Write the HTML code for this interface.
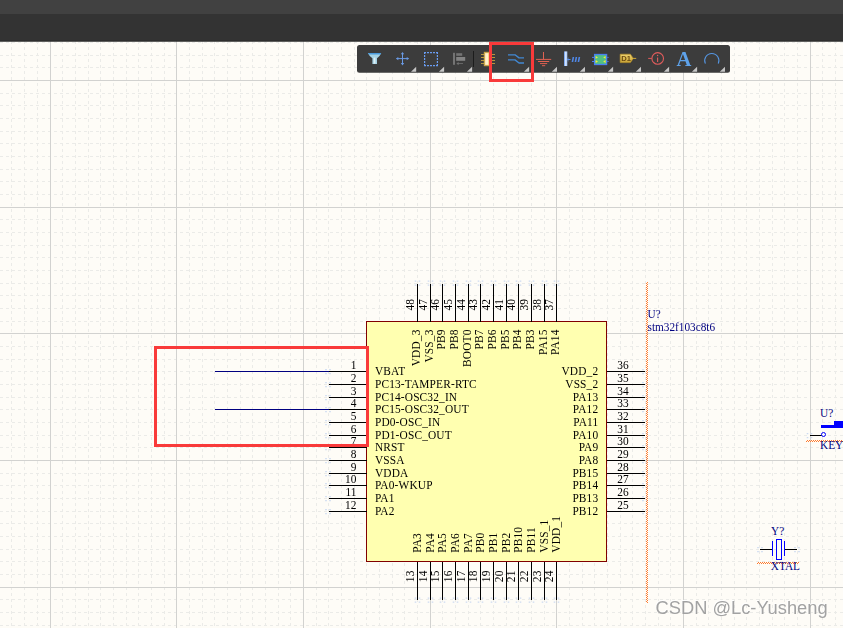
<!DOCTYPE html>
<html><head><meta charset="utf-8"><title>schematic</title>
<style>
html,body{margin:0;padding:0;background:#fefcf7;}
body{width:843px;height:628px;overflow:hidden;position:relative;font-family:"Liberation Sans",sans-serif;}
svg{position:absolute;left:0;top:0;display:block;}
.pn{font-family:"Liberation Serif",serif;font-size:12px;fill:#000;letter-spacing:0.16px;}
.bl{font-family:"Liberation Serif",serif;font-size:12px;fill:#000080;}
.wm{font-family:"Liberation Sans",sans-serif;font-size:18.3px;}
</style></head><body>
<svg width="843" height="628" viewBox="0 0 843 628">
<rect x="0" y="0" width="843" height="628" fill="#fefcf7"/>
<g shape-rendering="crispEdges" fill="none">
<path d="M11.5 41V628M24.5 41V628M37.5 41V628M62.5 41V628M75.5 41V628M88.5 41V628M100.5 41V628M113.5 41V628M126.5 41V628M138.5 41V628M151.5 41V628M164.5 41V628M189.5 41V628M202.5 41V628M214.5 41V628M227.5 41V628M240.5 41V628M252.5 41V628M265.5 41V628M278.5 41V628M290.5 41V628M316.5 41V628M328.5 41V628M341.5 41V628M354.5 41V628M366.5 41V628M379.5 41V628M392.5 41V628M404.5 41V628M417.5 41V628M442.5 41V628M455.5 41V628M468.5 41V628M480.5 41V628M493.5 41V628M506.5 41V628M518.5 41V628M531.5 41V628M544.5 41V628M569.5 41V628M582.5 41V628M594.5 41V628M607.5 41V628M620.5 41V628M632.5 41V628M645.5 41V628M658.5 41V628M670.5 41V628M696.5 41V628M708.5 41V628M721.5 41V628M734.5 41V628M746.5 41V628M759.5 41V628M772.5 41V628M784.5 41V628M797.5 41V628M822.5 41V628M835.5 41V628" stroke="#ebebe8" stroke-width="1" stroke-dasharray="3 3" stroke-dashoffset="0"/>
<path d="M0 42.5H843M0 55.5H843M0 67.5H843M0 93.5H843M0 105.5H843M0 118.5H843M0 131.5H843M0 143.5H843M0 156.5H843M0 169.5H843M0 181.5H843M0 194.5H843M0 219.5H843M0 232.5H843M0 245.5H843M0 257.5H843M0 270.5H843M0 283.5H843M0 295.5H843M0 308.5H843M0 321.5H843M0 346.5H843M0 359.5H843M0 371.5H843M0 384.5H843M0 397.5H843M0 409.5H843M0 422.5H843M0 435.5H843M0 447.5H843M0 473.5H843M0 485.5H843M0 498.5H843M0 511.5H843M0 523.5H843M0 536.5H843M0 549.5H843M0 561.5H843M0 574.5H843M0 599.5H843M0 612.5H843M0 625.5H843" stroke="#ebebe8" stroke-width="1" stroke-dasharray="3 3" stroke-dashoffset="0"/>
<path d="M50.5 41V628M176.5 41V628M303.5 41V628M430.5 41V628M556.5 41V628M683.5 41V628M810.5 41V628M0 80.5H843M0 207.5H843M0 333.5H843M0 460.5H843M0 587.5H843" stroke="#d2d2d0" stroke-width="1"/>
</g>
<rect x="366.5" y="321.5" width="240.0" height="240.0" fill="#ffffb0" stroke="#800000" stroke-width="1" shape-rendering="crispEdges"/>
<path d="M325.2 368.9h1.6v1.3h-1.6zM325.2 372.9h1.6v1.3h-1.6zM329.2 368.9h1.6v1.3h-1.6zM329.2 372.9h1.6v1.3h-1.6zM642.2 368.9h1.6v1.3h-1.6zM642.2 372.9h1.6v1.3h-1.6zM646.2 368.9h1.6v1.3h-1.6zM646.2 372.9h1.6v1.3h-1.6zM414.7 280.4h1.6v1.3h-1.6zM414.7 284.4h1.6v1.3h-1.6zM418.7 280.4h1.6v1.3h-1.6zM418.7 284.4h1.6v1.3h-1.6zM414.7 597.4h1.6v1.3h-1.6zM414.7 601.4h1.6v1.3h-1.6zM418.7 597.4h1.6v1.3h-1.6zM418.7 601.4h1.6v1.3h-1.6zM325.2 381.9h1.6v1.3h-1.6zM325.2 385.9h1.6v1.3h-1.6zM329.2 381.9h1.6v1.3h-1.6zM329.2 385.9h1.6v1.3h-1.6zM642.2 381.9h1.6v1.3h-1.6zM642.2 385.9h1.6v1.3h-1.6zM646.2 381.9h1.6v1.3h-1.6zM646.2 385.9h1.6v1.3h-1.6zM427.7 280.4h1.6v1.3h-1.6zM427.7 284.4h1.6v1.3h-1.6zM431.7 280.4h1.6v1.3h-1.6zM431.7 284.4h1.6v1.3h-1.6zM427.7 597.4h1.6v1.3h-1.6zM427.7 601.4h1.6v1.3h-1.6zM431.7 597.4h1.6v1.3h-1.6zM431.7 601.4h1.6v1.3h-1.6zM325.2 394.9h1.6v1.3h-1.6zM325.2 398.9h1.6v1.3h-1.6zM329.2 394.9h1.6v1.3h-1.6zM329.2 398.9h1.6v1.3h-1.6zM642.2 394.9h1.6v1.3h-1.6zM642.2 398.9h1.6v1.3h-1.6zM646.2 394.9h1.6v1.3h-1.6zM646.2 398.9h1.6v1.3h-1.6zM439.7 280.4h1.6v1.3h-1.6zM439.7 284.4h1.6v1.3h-1.6zM443.7 280.4h1.6v1.3h-1.6zM443.7 284.4h1.6v1.3h-1.6zM439.7 597.4h1.6v1.3h-1.6zM439.7 601.4h1.6v1.3h-1.6zM443.7 597.4h1.6v1.3h-1.6zM443.7 601.4h1.6v1.3h-1.6zM325.2 406.9h1.6v1.3h-1.6zM325.2 410.9h1.6v1.3h-1.6zM329.2 406.9h1.6v1.3h-1.6zM329.2 410.9h1.6v1.3h-1.6zM642.2 406.9h1.6v1.3h-1.6zM642.2 410.9h1.6v1.3h-1.6zM646.2 406.9h1.6v1.3h-1.6zM646.2 410.9h1.6v1.3h-1.6zM452.7 280.4h1.6v1.3h-1.6zM452.7 284.4h1.6v1.3h-1.6zM456.7 280.4h1.6v1.3h-1.6zM456.7 284.4h1.6v1.3h-1.6zM452.7 597.4h1.6v1.3h-1.6zM452.7 601.4h1.6v1.3h-1.6zM456.7 597.4h1.6v1.3h-1.6zM456.7 601.4h1.6v1.3h-1.6zM325.2 419.9h1.6v1.3h-1.6zM325.2 423.9h1.6v1.3h-1.6zM329.2 419.9h1.6v1.3h-1.6zM329.2 423.9h1.6v1.3h-1.6zM642.2 419.9h1.6v1.3h-1.6zM642.2 423.9h1.6v1.3h-1.6zM646.2 419.9h1.6v1.3h-1.6zM646.2 423.9h1.6v1.3h-1.6zM465.7 280.4h1.6v1.3h-1.6zM465.7 284.4h1.6v1.3h-1.6zM469.7 280.4h1.6v1.3h-1.6zM469.7 284.4h1.6v1.3h-1.6zM465.7 597.4h1.6v1.3h-1.6zM465.7 601.4h1.6v1.3h-1.6zM469.7 597.4h1.6v1.3h-1.6zM469.7 601.4h1.6v1.3h-1.6zM325.2 432.9h1.6v1.3h-1.6zM325.2 436.9h1.6v1.3h-1.6zM329.2 432.9h1.6v1.3h-1.6zM329.2 436.9h1.6v1.3h-1.6zM642.2 432.9h1.6v1.3h-1.6zM642.2 436.9h1.6v1.3h-1.6zM646.2 432.9h1.6v1.3h-1.6zM646.2 436.9h1.6v1.3h-1.6zM477.7 280.4h1.6v1.3h-1.6zM477.7 284.4h1.6v1.3h-1.6zM481.7 280.4h1.6v1.3h-1.6zM481.7 284.4h1.6v1.3h-1.6zM477.7 597.4h1.6v1.3h-1.6zM477.7 601.4h1.6v1.3h-1.6zM481.7 597.4h1.6v1.3h-1.6zM481.7 601.4h1.6v1.3h-1.6zM325.2 444.9h1.6v1.3h-1.6zM325.2 448.9h1.6v1.3h-1.6zM329.2 444.9h1.6v1.3h-1.6zM329.2 448.9h1.6v1.3h-1.6zM642.2 444.9h1.6v1.3h-1.6zM642.2 448.9h1.6v1.3h-1.6zM646.2 444.9h1.6v1.3h-1.6zM646.2 448.9h1.6v1.3h-1.6zM490.7 280.4h1.6v1.3h-1.6zM490.7 284.4h1.6v1.3h-1.6zM494.7 280.4h1.6v1.3h-1.6zM494.7 284.4h1.6v1.3h-1.6zM490.7 597.4h1.6v1.3h-1.6zM490.7 601.4h1.6v1.3h-1.6zM494.7 597.4h1.6v1.3h-1.6zM494.7 601.4h1.6v1.3h-1.6zM325.2 457.9h1.6v1.3h-1.6zM325.2 461.9h1.6v1.3h-1.6zM329.2 457.9h1.6v1.3h-1.6zM329.2 461.9h1.6v1.3h-1.6zM642.2 457.9h1.6v1.3h-1.6zM642.2 461.9h1.6v1.3h-1.6zM646.2 457.9h1.6v1.3h-1.6zM646.2 461.9h1.6v1.3h-1.6zM503.7 280.4h1.6v1.3h-1.6zM503.7 284.4h1.6v1.3h-1.6zM507.7 280.4h1.6v1.3h-1.6zM507.7 284.4h1.6v1.3h-1.6zM503.7 597.4h1.6v1.3h-1.6zM503.7 601.4h1.6v1.3h-1.6zM507.7 597.4h1.6v1.3h-1.6zM507.7 601.4h1.6v1.3h-1.6zM325.2 470.9h1.6v1.3h-1.6zM325.2 474.9h1.6v1.3h-1.6zM329.2 470.9h1.6v1.3h-1.6zM329.2 474.9h1.6v1.3h-1.6zM642.2 470.9h1.6v1.3h-1.6zM642.2 474.9h1.6v1.3h-1.6zM646.2 470.9h1.6v1.3h-1.6zM646.2 474.9h1.6v1.3h-1.6zM515.7 280.4h1.6v1.3h-1.6zM515.7 284.4h1.6v1.3h-1.6zM519.7 280.4h1.6v1.3h-1.6zM519.7 284.4h1.6v1.3h-1.6zM515.7 597.4h1.6v1.3h-1.6zM515.7 601.4h1.6v1.3h-1.6zM519.7 597.4h1.6v1.3h-1.6zM519.7 601.4h1.6v1.3h-1.6zM325.2 482.9h1.6v1.3h-1.6zM325.2 486.9h1.6v1.3h-1.6zM329.2 482.9h1.6v1.3h-1.6zM329.2 486.9h1.6v1.3h-1.6zM642.2 482.9h1.6v1.3h-1.6zM642.2 486.9h1.6v1.3h-1.6zM646.2 482.9h1.6v1.3h-1.6zM646.2 486.9h1.6v1.3h-1.6zM528.7 280.4h1.6v1.3h-1.6zM528.7 284.4h1.6v1.3h-1.6zM532.7 280.4h1.6v1.3h-1.6zM532.7 284.4h1.6v1.3h-1.6zM528.7 597.4h1.6v1.3h-1.6zM528.7 601.4h1.6v1.3h-1.6zM532.7 597.4h1.6v1.3h-1.6zM532.7 601.4h1.6v1.3h-1.6zM325.2 495.9h1.6v1.3h-1.6zM325.2 499.9h1.6v1.3h-1.6zM329.2 495.9h1.6v1.3h-1.6zM329.2 499.9h1.6v1.3h-1.6zM642.2 495.9h1.6v1.3h-1.6zM642.2 499.9h1.6v1.3h-1.6zM646.2 495.9h1.6v1.3h-1.6zM646.2 499.9h1.6v1.3h-1.6zM541.7 280.4h1.6v1.3h-1.6zM541.7 284.4h1.6v1.3h-1.6zM545.7 280.4h1.6v1.3h-1.6zM545.7 284.4h1.6v1.3h-1.6zM541.7 597.4h1.6v1.3h-1.6zM541.7 601.4h1.6v1.3h-1.6zM545.7 597.4h1.6v1.3h-1.6zM545.7 601.4h1.6v1.3h-1.6zM325.2 508.9h1.6v1.3h-1.6zM325.2 512.9h1.6v1.3h-1.6zM329.2 508.9h1.6v1.3h-1.6zM329.2 512.9h1.6v1.3h-1.6zM642.2 508.9h1.6v1.3h-1.6zM642.2 512.9h1.6v1.3h-1.6zM646.2 508.9h1.6v1.3h-1.6zM646.2 512.9h1.6v1.3h-1.6zM553.7 280.4h1.6v1.3h-1.6zM553.7 284.4h1.6v1.3h-1.6zM557.7 280.4h1.6v1.3h-1.6zM557.7 284.4h1.6v1.3h-1.6zM553.7 597.4h1.6v1.3h-1.6zM553.7 601.4h1.6v1.3h-1.6zM557.7 597.4h1.6v1.3h-1.6zM557.7 601.4h1.6v1.3h-1.6zM757.2 546.9h1.6v1.3h-1.6zM757.2 550.9h1.6v1.3h-1.6zM761.2 546.9h1.6v1.3h-1.6zM761.2 550.9h1.6v1.3h-1.6zM794.2 546.9h1.6v1.3h-1.6zM794.2 550.9h1.6v1.3h-1.6zM798.2 546.9h1.6v1.3h-1.6zM798.2 550.9h1.6v1.3h-1.6zM806.7 432.9h1.6v1.3h-1.6zM806.7 436.9h1.6v1.3h-1.6zM810.7 432.9h1.6v1.3h-1.6zM810.7 436.9h1.6v1.3h-1.6z" fill="#cddaf1"/>
<path d="M329.0 371.5H366.5M606.5 371.5H645.0M417.5 284.0V321.5M417.5 561.5V600.0M329.0 384.5H366.5M606.5 384.5H645.0M430.5 284.0V321.5M430.5 561.5V600.0M329.0 397.5H366.5M606.5 397.5H645.0M442.5 284.0V321.5M442.5 561.5V600.0M329.0 409.5H366.5M606.5 409.5H645.0M455.5 284.0V321.5M455.5 561.5V600.0M329.0 422.5H366.5M606.5 422.5H645.0M468.5 284.0V321.5M468.5 561.5V600.0M329.0 435.5H366.5M606.5 435.5H645.0M480.5 284.0V321.5M480.5 561.5V600.0M329.0 447.5H366.5M606.5 447.5H645.0M493.5 284.0V321.5M493.5 561.5V600.0M329.0 460.5H366.5M606.5 460.5H645.0M506.5 284.0V321.5M506.5 561.5V600.0M329.0 473.5H366.5M606.5 473.5H645.0M518.5 284.0V321.5M518.5 561.5V600.0M329.0 485.5H366.5M606.5 485.5H645.0M531.5 284.0V321.5M531.5 561.5V600.0M329.0 498.5H366.5M606.5 498.5H645.0M544.5 284.0V321.5M544.5 561.5V600.0M329.0 511.5H366.5M606.5 511.5H645.0M556.5 284.0V321.5M556.5 561.5V600.0" stroke="#000" stroke-width="1" fill="none" shape-rendering="crispEdges"/>
<g opacity="0.999"><text class="pn" transform="translate(356.7 368.7) scale(0.950 1)" text-anchor="end">1</text>
<text class="pn" transform="translate(374.9 374.8) scale(0.950 1)">VBAT</text>
<text class="pn" transform="translate(617.2 368.5) scale(0.950 1)">36</text>
<text class="pn" transform="translate(598.3 374.7) scale(0.950 1)" text-anchor="end">VDD_2</text>
<text class="pn" transform="translate(414.2 310.5) rotate(-90) scale(0.950 1)">48</text>
<text class="pn" transform="translate(419.7 329.5) rotate(-90) scale(0.950 1)" text-anchor="end">VDD_3</text>
<text class="pn" transform="translate(414.2 570.5) rotate(-90) scale(0.950 1)" text-anchor="end">13</text>
<text class="pn" transform="translate(420.5 552.7) rotate(-90) scale(0.950 1)">PA3</text>
<text class="pn" transform="translate(356.7 381.7) scale(0.950 1)" text-anchor="end">2</text>
<text class="pn" transform="translate(374.9 387.8) scale(0.950 1)">PC13-TAMPER-RTC</text>
<text class="pn" transform="translate(617.2 381.5) scale(0.950 1)">35</text>
<text class="pn" transform="translate(598.3 387.7) scale(0.950 1)" text-anchor="end">VSS_2</text>
<text class="pn" transform="translate(427.2 310.5) rotate(-90) scale(0.950 1)">47</text>
<text class="pn" transform="translate(432.7 329.5) rotate(-90) scale(0.950 1)" text-anchor="end">VSS_3</text>
<text class="pn" transform="translate(427.2 570.5) rotate(-90) scale(0.950 1)" text-anchor="end">14</text>
<text class="pn" transform="translate(433.5 552.7) rotate(-90) scale(0.950 1)">PA4</text>
<text class="pn" transform="translate(356.7 394.7) scale(0.950 1)" text-anchor="end">3</text>
<text class="pn" transform="translate(374.9 400.8) scale(0.950 1)">PC14-OSC32_IN</text>
<text class="pn" transform="translate(617.2 394.5) scale(0.950 1)">34</text>
<text class="pn" transform="translate(598.3 400.7) scale(0.950 1)" text-anchor="end">PA13</text>
<text class="pn" transform="translate(439.2 310.5) rotate(-90) scale(0.950 1)">46</text>
<text class="pn" transform="translate(444.7 329.5) rotate(-90) scale(0.950 1)" text-anchor="end">PB9</text>
<text class="pn" transform="translate(439.2 570.5) rotate(-90) scale(0.950 1)" text-anchor="end">15</text>
<text class="pn" transform="translate(445.5 552.7) rotate(-90) scale(0.950 1)">PA5</text>
<text class="pn" transform="translate(356.7 406.7) scale(0.950 1)" text-anchor="end">4</text>
<text class="pn" transform="translate(374.9 412.8) scale(0.950 1)">PC15-OSC32_OUT</text>
<text class="pn" transform="translate(617.2 406.5) scale(0.950 1)">33</text>
<text class="pn" transform="translate(598.3 412.7) scale(0.950 1)" text-anchor="end">PA12</text>
<text class="pn" transform="translate(452.2 310.5) rotate(-90) scale(0.950 1)">45</text>
<text class="pn" transform="translate(457.7 329.5) rotate(-90) scale(0.950 1)" text-anchor="end">PB8</text>
<text class="pn" transform="translate(452.2 570.5) rotate(-90) scale(0.950 1)" text-anchor="end">16</text>
<text class="pn" transform="translate(458.5 552.7) rotate(-90) scale(0.950 1)">PA6</text>
<text class="pn" transform="translate(356.7 419.7) scale(0.950 1)" text-anchor="end">5</text>
<text class="pn" transform="translate(374.9 425.8) scale(0.950 1)">PD0-OSC_IN</text>
<text class="pn" transform="translate(617.2 419.5) scale(0.950 1)">32</text>
<text class="pn" transform="translate(598.3 425.7) scale(0.950 1)" text-anchor="end">PA11</text>
<text class="pn" transform="translate(465.2 310.5) rotate(-90) scale(0.950 1)">44</text>
<text class="pn" transform="translate(470.7 329.5) rotate(-90) scale(0.950 1)" text-anchor="end">BOOT0</text>
<text class="pn" transform="translate(465.2 570.5) rotate(-90) scale(0.950 1)" text-anchor="end">17</text>
<text class="pn" transform="translate(471.5 552.7) rotate(-90) scale(0.950 1)">PA7</text>
<text class="pn" transform="translate(356.7 432.7) scale(0.950 1)" text-anchor="end">6</text>
<text class="pn" transform="translate(374.9 438.8) scale(0.950 1)">PD1-OSC_OUT</text>
<text class="pn" transform="translate(617.2 432.5) scale(0.950 1)">31</text>
<text class="pn" transform="translate(598.3 438.7) scale(0.950 1)" text-anchor="end">PA10</text>
<text class="pn" transform="translate(477.2 310.5) rotate(-90) scale(0.950 1)">43</text>
<text class="pn" transform="translate(482.7 329.5) rotate(-90) scale(0.950 1)" text-anchor="end">PB7</text>
<text class="pn" transform="translate(477.2 570.5) rotate(-90) scale(0.950 1)" text-anchor="end">18</text>
<text class="pn" transform="translate(483.5 552.7) rotate(-90) scale(0.950 1)">PB0</text>
<text class="pn" transform="translate(356.7 444.7) scale(0.950 1)" text-anchor="end">7</text>
<text class="pn" transform="translate(374.9 450.8) scale(0.950 1)">NRST</text>
<text class="pn" transform="translate(617.2 444.5) scale(0.950 1)">30</text>
<text class="pn" transform="translate(598.3 450.7) scale(0.950 1)" text-anchor="end">PA9</text>
<text class="pn" transform="translate(490.2 310.5) rotate(-90) scale(0.950 1)">42</text>
<text class="pn" transform="translate(495.7 329.5) rotate(-90) scale(0.950 1)" text-anchor="end">PB6</text>
<text class="pn" transform="translate(490.2 570.5) rotate(-90) scale(0.950 1)" text-anchor="end">19</text>
<text class="pn" transform="translate(496.5 552.7) rotate(-90) scale(0.950 1)">PB1</text>
<text class="pn" transform="translate(356.7 457.7) scale(0.950 1)" text-anchor="end">8</text>
<text class="pn" transform="translate(374.9 463.8) scale(0.950 1)">VSSA</text>
<text class="pn" transform="translate(617.2 457.5) scale(0.950 1)">29</text>
<text class="pn" transform="translate(598.3 463.7) scale(0.950 1)" text-anchor="end">PA8</text>
<text class="pn" transform="translate(503.2 310.5) rotate(-90) scale(0.950 1)">41</text>
<text class="pn" transform="translate(508.7 329.5) rotate(-90) scale(0.950 1)" text-anchor="end">PB5</text>
<text class="pn" transform="translate(503.2 570.5) rotate(-90) scale(0.950 1)" text-anchor="end">20</text>
<text class="pn" transform="translate(509.5 552.7) rotate(-90) scale(0.950 1)">PB2</text>
<text class="pn" transform="translate(356.7 470.7) scale(0.950 1)" text-anchor="end">9</text>
<text class="pn" transform="translate(374.9 476.8) scale(0.950 1)">VDDA</text>
<text class="pn" transform="translate(617.2 470.5) scale(0.950 1)">28</text>
<text class="pn" transform="translate(598.3 476.7) scale(0.950 1)" text-anchor="end">PB15</text>
<text class="pn" transform="translate(515.2 310.5) rotate(-90) scale(0.950 1)">40</text>
<text class="pn" transform="translate(520.7 329.5) rotate(-90) scale(0.950 1)" text-anchor="end">PB4</text>
<text class="pn" transform="translate(515.2 570.5) rotate(-90) scale(0.950 1)" text-anchor="end">21</text>
<text class="pn" transform="translate(521.5 552.7) rotate(-90) scale(0.950 1)">PB10</text>
<text class="pn" transform="translate(356.7 482.7) scale(0.950 1)" text-anchor="end">10</text>
<text class="pn" transform="translate(374.9 488.8) scale(0.950 1)">PA0-WKUP</text>
<text class="pn" transform="translate(617.2 482.5) scale(0.950 1)">27</text>
<text class="pn" transform="translate(598.3 488.7) scale(0.950 1)" text-anchor="end">PB14</text>
<text class="pn" transform="translate(528.2 310.5) rotate(-90) scale(0.950 1)">39</text>
<text class="pn" transform="translate(533.7 329.5) rotate(-90) scale(0.950 1)" text-anchor="end">PB3</text>
<text class="pn" transform="translate(528.2 570.5) rotate(-90) scale(0.950 1)" text-anchor="end">22</text>
<text class="pn" transform="translate(534.5 552.7) rotate(-90) scale(0.950 1)">PB11</text>
<text class="pn" transform="translate(356.7 495.7) scale(0.950 1)" text-anchor="end">11</text>
<text class="pn" transform="translate(374.9 501.8) scale(0.950 1)">PA1</text>
<text class="pn" transform="translate(617.2 495.5) scale(0.950 1)">26</text>
<text class="pn" transform="translate(598.3 501.7) scale(0.950 1)" text-anchor="end">PB13</text>
<text class="pn" transform="translate(541.2 310.5) rotate(-90) scale(0.950 1)">38</text>
<text class="pn" transform="translate(546.7 329.5) rotate(-90) scale(0.950 1)" text-anchor="end">PA15</text>
<text class="pn" transform="translate(541.2 570.5) rotate(-90) scale(0.950 1)" text-anchor="end">23</text>
<text class="pn" transform="translate(547.5 552.7) rotate(-90) scale(0.950 1)">VSS_1</text>
<text class="pn" transform="translate(356.7 508.7) scale(0.950 1)" text-anchor="end">12</text>
<text class="pn" transform="translate(374.9 514.8) scale(0.950 1)">PA2</text>
<text class="pn" transform="translate(617.2 508.5) scale(0.950 1)">25</text>
<text class="pn" transform="translate(598.3 514.7) scale(0.950 1)" text-anchor="end">PB12</text>
<text class="pn" transform="translate(553.2 310.5) rotate(-90) scale(0.950 1)">37</text>
<text class="pn" transform="translate(558.7 329.5) rotate(-90) scale(0.950 1)" text-anchor="end">PA14</text>
<text class="pn" transform="translate(553.2 570.5) rotate(-90) scale(0.950 1)" text-anchor="end">24</text>
<text class="pn" transform="translate(559.5 552.7) rotate(-90) scale(0.950 1)">VDD_1</text></g>
<path d="M215.0 371.5H329.0M215.0 409.5H329.0" stroke="#000080" stroke-width="1" fill="none" shape-rendering="crispEdges"/>
<path d="M647.5 282V603" stroke="#ff7a2e" stroke-width="1" stroke-dasharray="1 1" shape-rendering="crispEdges"/><path d="M646.5 283V603" stroke="#ff7a2e" stroke-width="1" stroke-dasharray="1 1" shape-rendering="crispEdges"/>
<g opacity="0.999"><text class="bl" transform="translate(647.5 318.2) scale(0.940 1)">U?</text></g>
<g opacity="0.999"><text class="bl" transform="translate(647.5 330.8) scale(0.940 1)">stm32f103c8t6</text></g>
<path d="M806 441.5H843" stroke="#ff7a2e" stroke-width="1" stroke-dasharray="1 1" shape-rendering="crispEdges"/><path d="M807 440.5H843" stroke="#ff7a2e" stroke-width="1" stroke-dasharray="1 1" shape-rendering="crispEdges"/>
<g opacity="0.999"><text class="bl" transform="translate(820.0 416.6) scale(0.940 1)">U?</text></g>
<g opacity="0.999"><text class="bl" transform="translate(820.0 448.7) scale(0.940 1)">KEY</text></g>
<path d="M821 425H843V428H821ZM834 421H843V426H834Z" fill="#0000ff" shape-rendering="crispEdges"/>
<path d="M810 435.5H822" stroke="#000" stroke-width="1" shape-rendering="crispEdges"/>
<circle cx="823.5" cy="434.5" r="2" fill="#fefcf7" stroke="#0000ff" stroke-width="1"/>
<path d="M757 563.5H799" stroke="#ff7a2e" stroke-width="1" stroke-dasharray="1 1" shape-rendering="crispEdges"/><path d="M758 562.5H799" stroke="#ff7a2e" stroke-width="1" stroke-dasharray="1 1" shape-rendering="crispEdges"/>
<g opacity="0.999"><text class="bl" transform="translate(771.0 534.9) scale(0.940 1)">Y?</text></g>
<g opacity="0.999"><text class="bl" transform="translate(770.8 570.0) scale(0.940 1)">XTAL</text></g>
<path d="M760 549.5H772.5M784.5 549.5H797" stroke="#000" stroke-width="1" shape-rendering="crispEdges"/>
<path d="M772.5 541V556M784.5 541V556" stroke="#0000ff" stroke-width="1" shape-rendering="crispEdges"/>
<rect x="776.5" y="539.5" width="5" height="20" fill="#fefcf7" stroke="#0000ff" stroke-width="1" shape-rendering="crispEdges"/>
<rect x="155.5" y="347.5" width="212" height="98" fill="none" stroke="#f93a3a" stroke-width="3"/>
<rect x="0" y="0" width="843" height="14" fill="#414141"/>
<rect x="0" y="14" width="843" height="27.5" fill="#333333"/>
<rect x="0" y="40.5" width="843" height="1" fill="#2b2b2b"/>
<rect x="357" y="45" width="373" height="27.8" rx="2.5" ry="2.5" fill="#3c3c3c"/>
<path d="M416.2 71.7H411.0L416.2 66.7Z" fill="#c6c6c6"/>
<path d="M444.1 71.7H438.9L444.1 66.7Z" fill="#c6c6c6"/>
<path d="M472.1 71.7H466.9L472.1 66.7Z" fill="#c6c6c6"/>
<path d="M529.1 71.7H523.9L529.1 66.7Z" fill="#c6c6c6"/>
<path d="M557.0 71.7H551.8L557.0 66.7Z" fill="#c6c6c6"/>
<path d="M585.0 71.7H579.8L585.0 66.7Z" fill="#c6c6c6"/>
<path d="M613.1 71.7H607.9L613.1 66.7Z" fill="#c6c6c6"/>
<path d="M641.0 71.7H635.8L641.0 66.7Z" fill="#c6c6c6"/>
<path d="M669.1 71.7H663.9L669.1 66.7Z" fill="#c6c6c6"/>
<path d="M697.1 71.7H691.9L697.1 66.7Z" fill="#c6c6c6"/>
<path d="M725.0 71.7H719.8L725.0 66.7Z" fill="#c6c6c6"/>
<rect x="473" y="51" width="1" height="16" fill="#1c1c1c"/>
<path d="M368 53H381.2Q380 56.2 377 58.3V64H372.4V58.3Q369.2 56.2 368 53Z" fill="#a6d2e4"/>
<path d="M368 53H381.2L380.5 54.5H368.7Z" fill="#4a9ada"/>
<rect x="373.7" y="57.6" width="1.7" height="6" fill="#def0f6"/>
<g stroke="#6a9ae4" stroke-width="1" fill="#6a9ae4"><path d="M402.5 53V64.5M396.5 58.6H408.5" fill="none"/><path d="M402.5 52L404.2 54.3H400.8ZM402.5 65.4L404.2 63.1H400.8ZM396 58.6L398.3 56.9V60.3ZM409 58.6L406.7 56.9V60.3Z" stroke="none"/></g>
<path d="M424 52.6H438M424 65.6H438M424.6 52V66.2M437.4 52V66.2" fill="none" stroke="#6a9cf0" stroke-width="1.2" stroke-dasharray="2 1"/>
<g fill="#747474"><rect x="453" y="52.8" width="2" height="12"/><rect x="456.2" y="53.2" width="6" height="2.6"/><rect x="456.2" y="57" width="9" height="3.8" fill="#838383"/><path d="M456.4 63.6L458.6 62V63.2H463V64H458.6V65.2Z"/></g>
<g><path d="M481 54.5H495M481 57.5H495M481 60.5H495M481 63.5H495" stroke="#b8963c" stroke-width="1"/><rect x="484.3" y="52.3" width="7.2" height="13.4" fill="#f3cf82" stroke="#c9a648" stroke-width="1"/><rect x="485.3" y="53.3" width="2.8" height="11.4" fill="#fff1cc"/></g>
<path d="M508 54.8H515L519 57.9H524M508 59.9H515L519 63H524" stroke="#4288d2" stroke-width="1.35" fill="none" stroke-linejoin="round"/>
<path d="M543.5 52V59.4M536 59.4H551.2M538 61.5H549.2M540 63.6H547.2M542 65.7H545.2" stroke="#e06252" stroke-width="1" fill="none"/>
<defs><linearGradient id="gb" x1="0" x2="1" y1="0" y2="0"><stop offset="0" stop-color="#5a90ea"/><stop offset="0.45" stop-color="#cfe2ff"/><stop offset="1" stop-color="#a8c8f8"/></linearGradient><linearGradient id="gd" x1="0" x2="0" y1="0" y2="1"><stop offset="0" stop-color="#f0d470"/><stop offset="1" stop-color="#c8a234"/></linearGradient></defs>
<rect x="564" y="51.4" width="3.3" height="14.6" fill="url(#gb)"/>
<path d="M567.3 59.5H570.5" stroke="#5a90ea" stroke-width="1" fill="none"/><path d="M568.6 58a1.6 1.6 0 0 0 0 3" stroke="#5a90ea" stroke-width="0.8" fill="none"/>
<path d="M572.6 57H574.2L573.2 62H571.6ZM575.6 57H577.2L576.2 62H574.6ZM578.6 57H580.2L579.2 62H577.6Z" fill="#4f86e4"/>
<path d="M592 57.4H594M592 61.5H594M607.3 57.4H608.6M607.3 61.5H608.6" stroke="#4a80f0" stroke-width="1"/>
<rect x="594.6" y="54.5" width="12" height="10" fill="#52c084" stroke="#4a80f0" stroke-width="1.3"/>
<path d="M595.6 56V58.8L598 57.4ZM595.6 60.1V62.9L598 61.5ZM605.6 56V58.8L603.2 57.4ZM605.6 60.1V62.9L603.2 61.5Z" fill="#f4e840"/>
<path d="M633 58.4H636.2" stroke="#d0a838" stroke-width="1"/>
<path d="M620.2 54.2H630.4L633.3 58.4L630.4 62.6H620.2Z" fill="url(#gd)" stroke="#b8922a" stroke-width="0.7"/>
<text x="621.2" y="61.3" style="font-family:'Liberation Sans',sans-serif;font-weight:bold;font-size:7.6px" fill="#6a4a12">D1</text>
<circle cx="657.7" cy="58.4" r="5.8" fill="none" stroke="#e05c5c" stroke-width="1.1"/>
<path d="M648.2 58.4H651.8" stroke="#e05c5c" stroke-width="1"/>
<path d="M657.6 57.4V62" stroke="#e05c5c" stroke-width="1.1"/><circle cx="657.6" cy="55.5" r="0.7" fill="#e05c5c"/>
<text x="684" y="66" text-anchor="middle" style="font-family:'Liberation Serif',serif;font-weight:bold;font-size:20.6px" fill="#5ea2ea">A</text>
<path d="M718.23 63.60A7.1 7.1 0 1 0 705.37 63.60" fill="none" stroke="#5596e2" stroke-width="1.05"/>
<rect x="490.5" y="43.5" width="42" height="37" fill="none" stroke="#f93a3a" stroke-width="3"/>
<text class="wm" x="655.6" y="614.3" fill="#ffffff" opacity="0.9" transform="translate(-0.8 -0.8)">CSDN @Lc-Yusheng</text>
<text class="wm" x="655.6" y="614.3" fill="#a2a2a2">CSDN @Lc-Yusheng</text>
</svg></body></html>
